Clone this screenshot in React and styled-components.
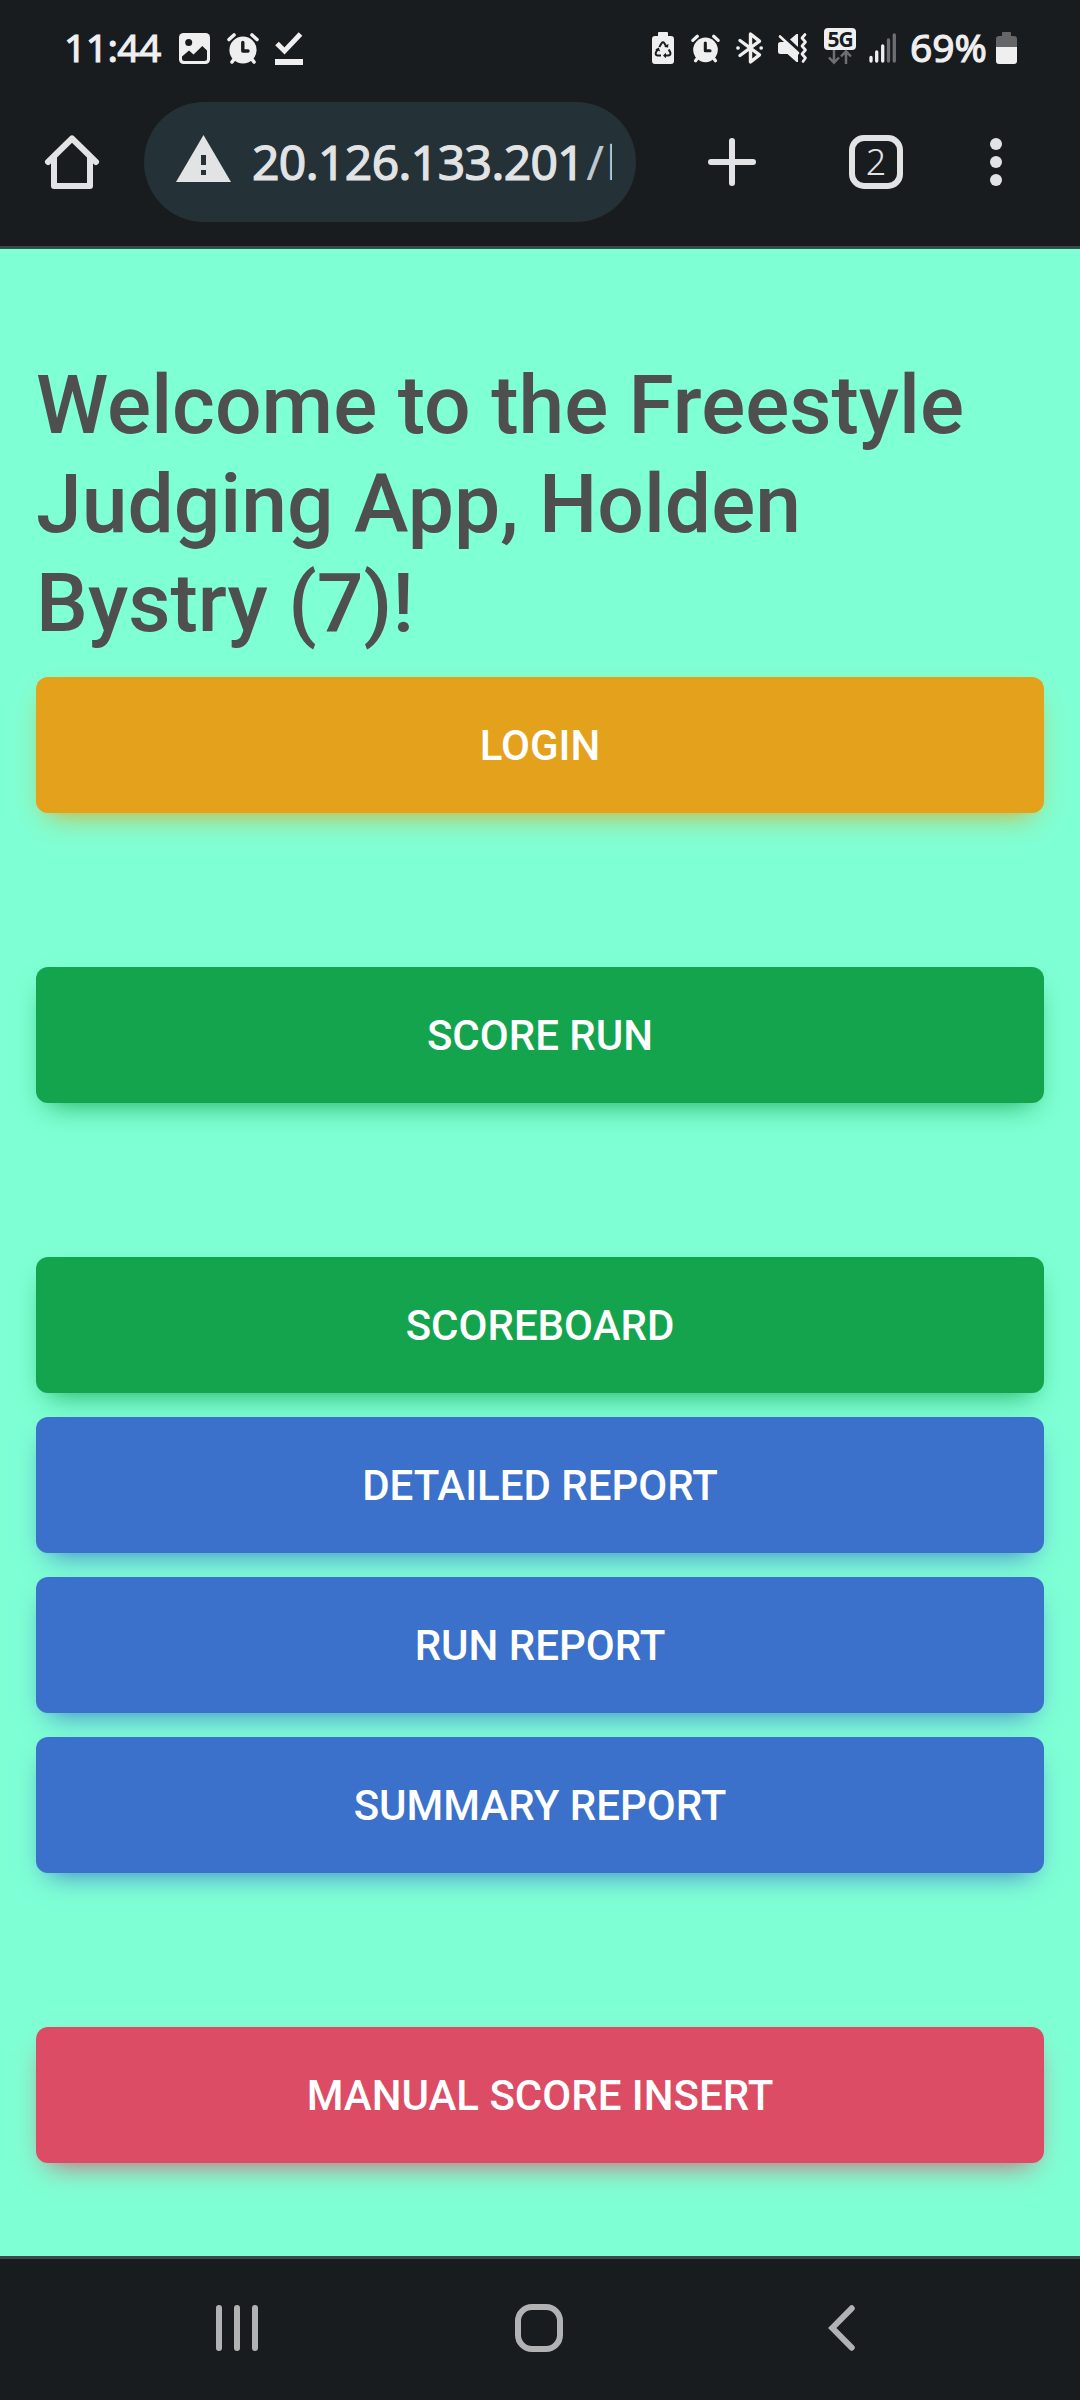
import React from "react";
import styled, { createGlobalStyle } from "styled-components";

const GlobalStyle = createGlobalStyle`
  *, *::before, *::after { box-sizing: border-box; }
  body { margin: 0; background: #7fffd4; }
  svg { display: block; flex: none; overflow: visible; }
`;

const Screen = styled.div`
  width: 1080px;
  height: 2400px;
  display: flex;
  flex-direction: column;
  overflow: hidden;
  background: #7fffd4;
  font-family: Roboto, sans-serif;
`;

const StatusBar = styled.header`
  height: 90px;
  flex: none;
  display: flex;
  justify-content: space-between;
  align-items: flex-start;
  padding: 18px 63px 0 64px;
  background: #191c1f;
  color: #efefef;
  font-family: "Noto Sans", "Open Sans", sans-serif;
`;

const StatusGroup = styled.div`
  display: flex;
  align-items: center;
  height: 60px;
`;

const StatusText = styled.span`
  font-size: 39px;
  line-height: 57px;
  margin-bottom: 3px;
  font-weight: 400;
  -webkit-text-stroke: 1.1px #efefef;
  letter-spacing: ${(p) => p.$spacing}px;
  width: ${(p) => p.$width}px;
  white-space: nowrap;
`;

const IconSlot = styled.span`
  display: flex;
  margin-left: ${(p) => p.$gap || 0}px;
`;

const NetworkBadge = styled.span`
  display: flex;
  flex-direction: column;
  align-items: center;
  width: 32px;
  margin-left: 17px;
  margin-top: -4px;
`;

const NetworkLabel = styled.span`
  width: 32px;
  height: 22px;
  border-radius: 4px;
  background: #efefef;
  color: #191c1f;
  font-size: 21px;
  font-weight: 700;
  line-height: 22px;
  text-align: center;
  letter-spacing: -1px;
`;

const Toolbar = styled.nav`
  height: 156px;
  flex: none;
  display: flex;
  align-items: flex-start;
  padding: 12px 78px 0 45px;
  background: #191c1f;
`;

const ToolbarItem = styled.div`
  height: 120px;
  display: flex;
  align-items: center;
  margin-left: ${(p) => p.$gap || 0}px;
`;

const AddressBar = styled.div`
  width: 492px;
  height: 120px;
  flex: none;
  margin-left: 45px;
  padding: 0 24px 0 32px;
  display: flex;
  align-items: center;
  border-radius: 60px;
  background: #243137;
`;

const Url = styled.div`
  flex: 1;
  margin-left: 21px;
  overflow: hidden;
  white-space: nowrap;
  font-family: "Noto Sans", "Open Sans", sans-serif;
  font-size: 48px;
  line-height: 72px;
  font-weight: 400;
  -webkit-text-stroke: 1.2px #e2e3e5;
  letter-spacing: -0.6px;
  color: #e2e3e5;
`;

const UrlPath = styled.span`
  margin-left: 2px;
  letter-spacing: 2px;
  -webkit-text-stroke: 0;
  color: #bec8cc;
`;

const TabCount = styled.div`
  width: 54px;
  height: 54px;
  border: 6px solid #e2e3e5;
  border-radius: 15px;
  color: #e2e3e5;
  font-family: "Noto Sans", "Open Sans", sans-serif;
  font-size: 36px;
  font-weight: 300;
  line-height: 42px;
  text-align: center;
`;

const Divider = styled.div`
  height: 3px;
  flex: none;
  background: ${(p) => p.$color};
`;

const Page = styled.main`
  flex: 1;
  min-height: 0;
  padding: 106.6px 36px 0;
`;

const Title = styled.h1`
  margin: 0 0 24.4px;
  color: #4f4f4f;
  font-size: 82.2px;
  font-weight: 500;
  line-height: 99px;
`;

const ButtonGroup = styled.section`
  display: flex;
  flex-direction: column;
  gap: 24px;
  margin-bottom: 154px;
`;

const Button = styled.button`
  height: 136px;
  width: 100%;
  padding: 1px 0 0;
  border: 0;
  border-radius: 12px;
  background: ${(p) => p.$color};
  box-shadow: 0 12px 27px -12px ${(p) => p.$color};
  color: #fff;
  font-family: inherit;
  font-size: 42px;
  font-weight: 500;
  line-height: 63px;
  text-transform: uppercase;
`;

const NavBar = styled.footer`
  height: 141px;
  flex: none;
  display: flex;
  align-items: flex-start;
  padding: 45px 0 0 216px;
  background: #191c1f;
`;

const NavItem = styled.div`
  display: flex;
  margin-left: ${(p) => p.$gap || 0}px;
`;

const AlarmIcon = ({ width = 32, height = 31 }) => (
  <svg width={width} height={height} viewBox="0 0 32 31" fill="none">
    <circle cx="16" cy="17" r="13.6" fill="#efefef" />
    <path d="M2 6.5 7 2M30 6.5 25 2M5 29l3-4M27 29l-3-4" stroke="#efefef" strokeWidth="3.6" strokeLinecap="round" />
    <path d="M15.8 9.500V18H21" stroke="#191c1f" strokeWidth="3.4" strokeLinecap="round" strokeLinejoin="round" />
  </svg>
);

const ImageIcon = () => (
  <svg width="31" height="31" viewBox="0 0 31 31">
    <rect width="31" height="31" rx="4.500" fill="#efefef" />
    <circle cx="9.700" cy="9.600" r="3.500" fill="#191c1f" />
    <path d="M3 23.500 10 17.500 14.500 21.500 23.300 13 28 17.500V25.500Q28 28 25.500 28H5.500Q3 28 3 25.500Z" fill="#191c1f" />
  </svg>
);

const DoneIcon = () => (
  <svg width="28" height="33" viewBox="0 0 28 33">
    <path d="M2 11.500 9.500 19 25.500 2" fill="none" stroke="#efefef" strokeWidth="5" />
    <rect y="27" width="28" height="6" fill="#efefef" />
  </svg>
);

const BatterySaverIcon = () => (
  <svg width="22" height="32" viewBox="0 0 22 32">
    <path d="M7 0h8q1 0 1 1v3h3q3 0 3 3v22q0 3-3 3H3q-3 0-3-3V7q0-3 3-3h3V1q0-1 1-1z" fill="#efefef" />
    <path d="M7.300 15 9.600 11.300Q11 9.300 12.400 11.300L14.600 15M16.700 17.500 18.300 20.400Q19 23.200 16.500 23.500H12.500M9 23.500H5.500Q3 23.200 3.900 20.400L5.500 17.500" fill="none" stroke="#191c1f" strokeWidth="2" />
    <path d="M14 20.700v5.600L11 23.500zM3.200 17.500 6.800 15.500 8.200 19.400zM12 14.300 16 15.800 16.500 11.900z" fill="#191c1f" />
  </svg>
);

const BluetoothIcon = () => (
  <svg width="27" height="32" viewBox="0 0 27 32" fill="none" stroke="#efefef" strokeWidth="3.400" strokeLinecap="round" strokeLinejoin="round">
    <path d="M4 8.500 23.500 22.800 14.500 30V2L23.500 9.200 4 23.500" />
    <path d="M1.800 16h.4M25 16h.3" />
  </svg>
);

const MuteIcon = () => (
  <svg width="29" height="30" viewBox="0 0 29 30" fill="none">
    <path d="M0 11.500Q0 9 2.500 9H7L20 21V29H18.500L9.500 21H2.500Q0 21 0 18.500Z" fill="#efefef" />
    <path d="M12 6.500 18.500 1H20V14Z" fill="#efefef" />
    <path d="M2 3.500 20 20" stroke="#efefef" strokeWidth="2.600" strokeLinecap="round" />
    <path d="M27 1.500 24 5 27.500 9 24 13 27.500 17 24 21 27.500 25 25 28.500" stroke="#efefef" strokeWidth="2.700" strokeLinecap="round" strokeLinejoin="round" />
  </svg>
);

const DataArrows = () => (
  <svg width="24" height="14" viewBox="0 0 24 14" fill="none" stroke="#6d6f71" strokeWidth="2.500">
    <path d="M6 0V13M1 7.500 6 12.700 11 7.500M18 14V2M13 6.500 18 1.300 23 6.500" />
  </svg>
);

const SignalIcon = () => (
  <svg width="27" height="30" viewBox="0 0 27 30" strokeWidth="3.300" strokeLinecap="round">
    <path d="M2 24.500V28M7.700 19V28M13.700 13V28" stroke="#efefef" />
    <path d="M19.500 7V28M25.300 2V28" stroke="#6d6f71" />
  </svg>
);

const BatteryIcon = () => (
  <svg width="21" height="32" viewBox="0 0 21 32">
    <path d="M7 0h7q1 0 1 1v3h3q3 0 3 3v8H0V7q0-3 3-3h3V1q0-1 1-1z" fill="#646668" />
    <path d="M0 15H21V29q0 3-3 3H3q-3 0-3-3z" fill="#efefef" />
  </svg>
);

const HomeIcon = () => (
  <svg width="54" height="54" viewBox="0 0 54 54" fill="none" stroke="#e2e3e5" strokeWidth="6" strokeLinecap="round" strokeLinejoin="round">
    <path d="M3 27 27 3.500 51 27" />
    <path d="M9 23V51H45V23" />
  </svg>
);

const WarningIcon = () => (
  <svg width="55" height="47" viewBox="0 0 55 47">
    <path d="M27.500 0 55 47H0Z" fill="#e2e3e5" />
    <path d="M25 20h5v10h-5zM25 35h5v5h-5z" fill="#243137" />
  </svg>
);

const WarningSlot = styled.span`
  display: flex;
  margin-bottom: 7px;
`;

const PlusIcon = () => (
  <svg width="48" height="48" viewBox="0 0 48 48" stroke="#e2e3e5" strokeWidth="6" strokeLinecap="round">
    <path d="M3 24H45M24 3V45" />
  </svg>
);

const MoreIcon = () => (
  <svg width="12" height="48" viewBox="0 0 12 48" fill="#e2e3e5">
    <circle cx="6" cy="6" r="6" />
    <circle cx="6" cy="24" r="6" />
    <circle cx="6" cy="42" r="6" />
  </svg>
);

const RecentsIcon = () => (
  <svg width="42" height="48" viewBox="0 0 42 48" stroke="#b1b2b4" strokeWidth="6" strokeLinecap="round">
    <path d="M3 4V44M21 4V44M39 4V44" />
  </svg>
);

const NavHomeIcon = () => (
  <svg width="48" height="48" viewBox="0 0 48 48" fill="none" stroke="#b1b2b4" strokeWidth="6">
    <rect x="3" y="3" width="42" height="42" rx="14" />
  </svg>
);

const BackIcon = () => (
  <svg width="27" height="48" viewBox="0 0 27 48" fill="none" stroke="#b1b2b4" strokeWidth="6" strokeLinecap="round">
    <path d="M23.700 4.300 4.300 24 23.700 43.700" />
  </svg>
);

const colors = { warning: "#e4a11b", success: "#14a44d", primary: "#3b71ca", danger: "#dc4c64" };

const groups = [
  [["Login", "warning"]],
  [["Score Run", "success"]],
  [
    ["Scoreboard", "success"],
    ["Detailed Report", "primary"],
    ["Run Report", "primary"],
    ["Summary Report", "primary"],
  ],
  [["Manual Score Insert", "danger"]],
];

export default function App() {
  return (
    <Screen>
      <GlobalStyle />
      <StatusBar>
        <StatusGroup>
          <StatusText $width={97} $spacing={-0.6}>11:44</StatusText>
          <IconSlot $gap={18}><ImageIcon /></IconSlot>
          <IconSlot $gap={17}><AlarmIcon /></IconSlot>
          <IconSlot $gap={16}><DoneIcon /></IconSlot>
        </StatusGroup>
        <StatusGroup>
          <IconSlot><BatterySaverIcon /></IconSlot>
          <IconSlot $gap={17}><AlarmIcon width={29} height={29} /></IconSlot>
          <IconSlot $gap={16}><BluetoothIcon /></IconSlot>
          <IconSlot $gap={15}><MuteIcon /></IconSlot>
          <NetworkBadge>
            <NetworkLabel>5G</NetworkLabel>
            <DataArrows />
          </NetworkBadge>
          <IconSlot $gap={13}><SignalIcon /></IconSlot>
          <IconSlot $gap={14}>
            <StatusText $width={78} $spacing={0}>69%</StatusText>
          </IconSlot>
          <IconSlot $gap={8}><BatteryIcon /></IconSlot>
        </StatusGroup>
      </StatusBar>
      <Toolbar>
        <ToolbarItem><HomeIcon /></ToolbarItem>
        <AddressBar>
          <WarningSlot><WarningIcon /></WarningSlot>
          <Url>20.126.133.201<UrlPath>/l</UrlPath></Url>
        </AddressBar>
        <ToolbarItem $gap={72}><PlusIcon /></ToolbarItem>
        <ToolbarItem $gap={93}><TabCount>2</TabCount></ToolbarItem>
        <ToolbarItem $gap={87}><MoreIcon /></ToolbarItem>
      </Toolbar>
      <Divider $color="linear-gradient(#3c474a 66%, #2c5a4d 66%)" />
      <Page>
        <Title>Welcome to the Freestyle Judging App, Holden Bystry (7)!</Title>
        {groups.map((group, i) => (
          <ButtonGroup key={i}>
            {group.map(([label, kind]) => (
              <Button key={label} $color={colors[kind]}>{label}</Button>
            ))}
          </ButtonGroup>
        ))}
      </Page>
      <Divider $color="#3c474b" />
      <NavBar>
        <NavItem><RecentsIcon /></NavItem>
        <NavItem $gap={257}><NavHomeIcon /></NavItem>
        <NavItem $gap={265}><BackIcon /></NavItem>
      </NavBar>
    </Screen>
  );
}
